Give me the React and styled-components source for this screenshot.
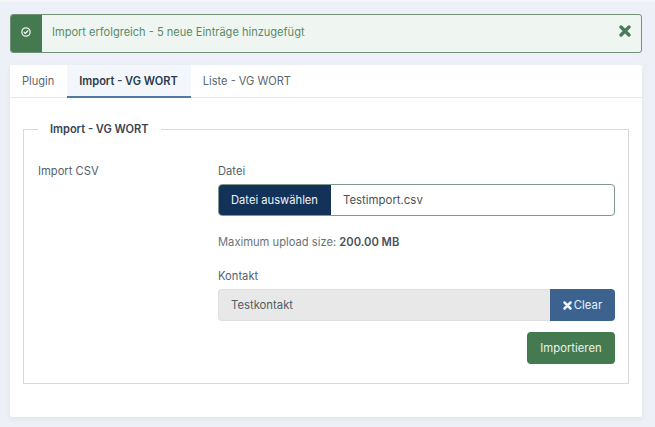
import { createGlobalStyle } from "styled-components"
import styled from "styled-components"

const Global = createGlobalStyle`
    html, body {
        margin: 0;
        padding: 0;
        background: #edf1f7;
    }
    body {
        font-family: Inter, Roboto, "Liberation Sans", sans-serif;
        font-size: 11.2px;
        color: #495057;
    }
    * {
        box-sizing: border-box;
    }
`

const Page = styled.div`
    width: 655px;
    height: 427px;
    overflow: hidden;
    display: flex;
    flex-direction: column;
    padding: 12px 13px 0 10px;
    border-top: 2px solid #f5f6f9;
`

const Alert = styled.div`
    display: flex;
    height: 39px;
    border: 1px solid #6f9279;
    border-radius: 3px;
    background: #eff6f1;
    overflow: hidden;
`

const AlertIcon = styled.div`
    width: 32px;
    background: #457a50;
    display: flex;
    justify-content: center;
    align-items: center;
    margin: -1px 0 -1px -1px;
    padding-bottom: 3px;
`

const AlertText = styled.div`
    flex: 1;
    display: flex;
    align-items: center;
    padding: 0 0 3px 10px;
    color: #5a8a6a;
    font-size: 11.05px;
`

const AlertClose = styled.div`
    display: flex;
    align-items: center;
    padding: 0 10px 5px 0;
`

const Card = styled.div`
    margin-top: 12px;
    height: 352px;
    background: #fff;
    border-radius: 2px;
    box-shadow: 0 2px 4px rgba(180, 190, 205, 0.25);
`

const Tabs = styled.div`
    display: flex;
    height: 33px;
    border-bottom: 1px solid #e6e8eb;
`

const Tab = styled.div`
    display: flex;
    align-items: center;
    padding: 0 ${p => (p.$active ? "13px" : "12px")} 0 12px;
    margin-left: ${p => (p.$active ? "1px" : "0")};
    font-size: 11.05px;
    color: ${p => (p.$active ? "#2b3a4d" : "#5c6670")};
    font-weight: ${p => (p.$active ? 600 : 400)};
    background: ${p => (p.$active ? "#f3f6fa" : "transparent")};
    border-bottom: ${p => (p.$active ? "2px solid #517aa5" : "none")};
    height: ${p => (p.$active ? "33px" : "32px")};
`

const Body = styled.div`
    padding: 24px 13px 0;
`

const Fieldset = styled.fieldset`
    margin: 0;
    padding: 28px 13px 19px 14px;
    height: 262px;
    border: 1px solid #d5d9de;
    border-radius: 0;
    display: grid;
    grid-template-columns: 180px 1fr;
`

const Legend = styled.legend`
    margin-left: 0;
    padding: 0 12px;
    font-size: 11.05px;
    font-weight: 600;
    color: #3b4450;
`

const RowLabel = styled.div`
    color: #56606a;
`

const Column = styled.div`
    display: flex;
    flex-direction: column;
`

const FieldLabel = styled.div`
    line-height: 14px;
    color: #56606a;
    margin-bottom: 6px;
`

const FileRow = styled.div`
    display: flex;
    height: 32px;
    border: 1px solid #7f9a8a;
    border-radius: 4px;
    overflow: hidden;
`

const FileButton = styled.div`
    width: 113px;
    margin: -1px 0 -1px -1px;
    background: #12325a;
    color: #f1f4f8;
    display: flex;
    align-items: center;
    justify-content: center;
`

const FileName = styled.div`
    flex: 1;
    display: flex;
    align-items: center;
    padding-left: 12px;
    font-size: 11.4px;
    color: #4a525b;
`

const Hint = styled.div`
    margin: 19px 0 20px;
    line-height: 14px;
    color: #69727b;
    strong {
        font-weight: 600;
        color: #4a525b;
    }
`

const ContactRow = styled.div`
    display: flex;
    height: 32px;
`

const ContactValue = styled.div`
    flex: 1;
    display: flex;
    align-items: center;
    padding-left: 12px;
    background: #e8e8e9;
    border: 1px solid #dcdfe2;
    border-right: none;
    border-radius: 4px 0 0 4px;
    font-size: 11.3px;
    color: #555c63;
`

const ClearButton = styled.div`
    width: 65px;
    display: flex;
    align-items: center;
    justify-content: center;
    gap: 2px;
    background: #3c6290;
    color: #eef2f7;
    border-radius: 0 4px 4px 0;
    font-size: 11.3px;
`

const Actions = styled.div`
    display: flex;
    justify-content: flex-end;
    margin-top: 11px;
`

const ImportButton = styled.div`
    width: 88px;
    height: 32px;
    display: flex;
    align-items: center;
    justify-content: center;
    background: #457a50;
    color: #e8f3ea;
    border-radius: 4px;
    font-size: 11.3px;
`

const CheckIcon = () => (
    <svg width="10" height="10" viewBox="0 0 24 24" fill="none" stroke="#eef5f0" strokeWidth="3" strokeLinecap="round" strokeLinejoin="round">
        <circle cx="12" cy="12" r="10" />
        <path d="M7.5 12.5l3 3 6-6.5" />
    </svg>
)

const Cross = ({ size, color }) => (
    <svg width={size} height={size} viewBox="0 0 12 12" fill="none" stroke={color} strokeWidth="3.3" strokeLinecap="round">
        <path d="M2 2l8 8M10 2l-8 8" />
    </svg>
)

const App = () => {
    return (
        <Page>
            <Global />
            <Alert>
                <AlertIcon><CheckIcon /></AlertIcon>
                <AlertText>Import erfolgreich - 5 neue Einträge hinzugefügt</AlertText>
                <AlertClose><Cross size={12} color="#4a7a5c" /></AlertClose>
            </Alert>
            <Card>
                <Tabs>
                    <Tab>Plugin</Tab>
                    <Tab $active>Import - VG WORT</Tab>
                    <Tab>Liste - VG WORT</Tab>
                </Tabs>
                <Body>
                    <Fieldset>
                        <Legend>Import - VG WORT</Legend>
                        <RowLabel>Import CSV</RowLabel>
                        <Column>
                            <FieldLabel>Datei</FieldLabel>
                            <FileRow>
                                <FileButton>Datei auswählen</FileButton>
                                <FileName>Testimport.csv</FileName>
                            </FileRow>
                            <Hint>Maximum upload size: <strong>200.00 MB</strong></Hint>
                            <FieldLabel>Kontakt</FieldLabel>
                            <ContactRow>
                                <ContactValue>Testkontakt</ContactValue>
                                <ClearButton><Cross size={9} color="#eef2f7" />Clear</ClearButton>
                            </ContactRow>
                            <Actions>
                                <ImportButton>Importieren</ImportButton>
                            </Actions>
                        </Column>
                    </Fieldset>
                </Body>
            </Card>
        </Page>
    )
}

export default App
